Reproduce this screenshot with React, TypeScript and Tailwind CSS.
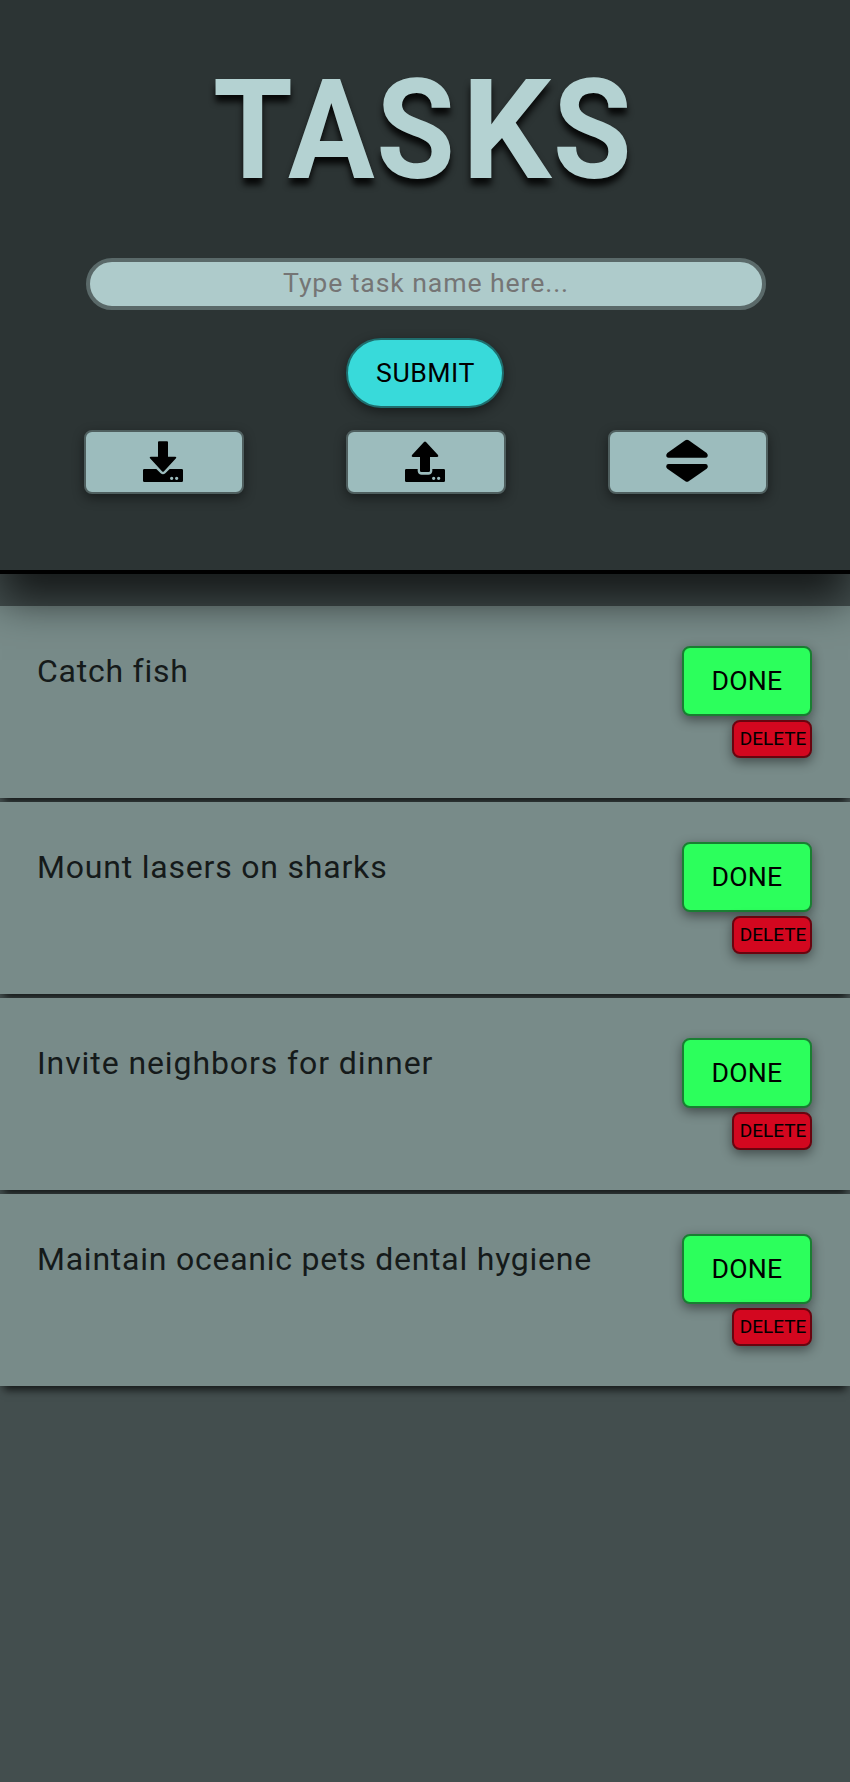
import React from "react";

const tasks = [
  { name: "Catch fish", spacing: "tracking-[0.76px]" },
  { name: "Mount lasers on sharks", spacing: "tracking-[0.8px]" },
  { name: "Invite neighbors for dinner", spacing: "tracking-[0.91px]" },
  { name: "Maintain oceanic pets dental hygiene", spacing: "tracking-[0.76px]" },
];

const titleParts = [
  { text: "TA", fit: "scale-x-[0.98] -translate-x-[1px]" },
  { text: "S", fit: "scale-x-[0.97] -translate-x-[5px]" },
  { text: "K", fit: "scale-x-[1.07] translate-x-[2.5px]" },
  { text: "S", fit: "scale-x-[0.97] translate-x-[4px]" },
];

function IconButton({ label, viewBox, children }: { label: string; viewBox: string; children: React.ReactNode }) {
  return (
    <button
      aria-label={label}
      className="flex h-16 w-40 items-center justify-center rounded-lg border-2 border-[#4f5f5f] bg-[#9cbcbd] shadow-[0_4px_12px_rgba(0,0,0,0.45)]"
    >
      <svg viewBox={viewBox} className="h-12 w-12" fill="black">
        {children}
      </svg>
    </button>
  );
}

export default function App() {
  return (
    <div className="min-h-[1782px] w-full overflow-hidden bg-[#434e4e] font-['Roboto',sans-serif] text-black">
      <header className="relative z-10 flex h-[574px] flex-col items-center border-b-4 border-black bg-[#2c3434] shadow-[0_28px_40px_-2px_rgba(0,0,0,0.68)]">
        <h1 className="mt-[60px] ml-[-7px] h-[198px] scale-x-[0.94] whitespace-nowrap text-[140px] leading-[140px] font-bold tracking-[2px] text-[#b4d2d2] [text-shadow:0_7px_7px_rgba(0,0,0,0.85)]">
          {titleParts.map(({ text, fit }, index) => (
            <span key={index} className={`inline-block ${fit}`}>
              {text}
            </span>
          ))}
        </h1>
        <input
          placeholder="Type task name here..."
          className="ml-[2px] h-[52px] w-[680px] shrink-0 rounded-full border-4 border-[#5a6969] bg-[#aecbcb] pb-[2px] text-center text-[26.67px] tracking-[0.88px] outline-none placeholder:text-[#757575]"
        />
        <button className="mt-7 h-[70px] w-[158px] shrink-0 rounded-full border-2 border-[#1f6e6e] bg-[#38dada] pl-px text-[26.67px] tracking-[0.5px] shadow-[0_4px_12px_rgba(0,0,0,0.45)]">
          SUBMIT
        </button>
        <div className="mt-[22px] ml-[2px] flex w-[684px] justify-between">
          <IconButton label="Save" viewBox="210 54 144 144">
            <path d="M267 64h24q3 0 3 3v43h22q5 1 2 5l-36 39q-3 3-6 0l-36-39q-3-4 2-5h22V67q0-3 3-3Z" />
            <path
              fillRule="evenodd"
              d="M223 147h36l13 13q7 6 14 0l13-13h36q4 0 4 4v31q0 4-4 4H223q-4 0-4-4v-31q0-4 4-4Zm77 28a5 5 0 1 0 10 0a5 5 0 1 0-10 0Zm15 0a5 5 0 1 0 10 0a5 5 0 1 0-10 0Z"
            />
          </IconButton>
          <IconButton label="Load" viewBox="216 324 144 144">
            <path d="M282 336q3-3 6 0l36 39q3 4-2 6h-22v41q0 4-4 4h-22q-4 0-4-4v-41h-22q-5-2-2-6Z" />
            <path
              fillRule="evenodd"
              d="M229 417h34v6q1 11 12 11h20q11 0 12-11v-6h34q4 0 4 4v31q0 4-4 4H229q-4 0-4-4v-31q0-4 4-4Zm77 28a5 5 0 1 0 10 0a5 5 0 1 0-10 0Zm15 0a5 5 0 1 0 10 0a5 5 0 1 0-10 0Z"
            />
          </IconButton>
          <IconButton label="Sort" viewBox="222 54 144 144">
            <path d="M286 61q5-3 10 0l54 38q6 6 2 12q-2 2-6 2H236q-4 0-6-2q-4-6 2-12Z" />
            <path d="M236 132h110q4 0 6 2q4 6-2 12l-54 38q-5 3-10 0l-54-38q-6-6-2-12q2-2 6-2Z" />
          </IconButton>
        </div>
      </header>
      <ul className="mt-8 flex flex-col gap-1">
        {tasks.map((task) => (
          <li
            key={task.name}
            className="flex h-[192px] items-start justify-between bg-[#788b89] pr-[38px] pl-[37px] shadow-[0_8px_8px_-4px_rgba(0,0,0,0.7)]"
          >
            <span className={`mt-[45px] whitespace-nowrap text-[32px] leading-[40px] text-[#151a1a] ${task.spacing}`}>
              {task.name}
            </span>
            <div className="mt-10 flex flex-col items-end gap-1">
              <button className="h-[70px] w-[130px] rounded-lg border-2 border-[#197f32] bg-[#2cff5c] text-[26.67px] tracking-[0.2px] shadow-[0_4px_12px_rgba(0,0,0,0.45)]">
                DONE
              </button>
              <button className="h-[38px] w-20 rounded-lg border-2 border-[#69040f] bg-[#d3071f] pl-[2px] text-[19px] shadow-[0_4px_12px_rgba(0,0,0,0.45)]">
                DELETE
              </button>
            </div>
          </li>
        ))}
      </ul>
    </div>
  );
}
